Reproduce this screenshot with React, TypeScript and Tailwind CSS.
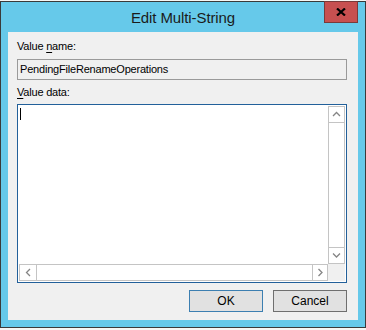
import React from "react";

function Chevron({ dir }: { dir: "up" | "down" | "left" | "right" }) {
  const pts: Record<string, string> = {
    up: "1,5 4.5,1.5 8,5",
    down: "1,1.5 4.5,5 8,1.5",
    left: "5,1 1.5,4.5 5,8",
    right: "1.5,1 5,4.5 1.5,8",
  };
  const vertical = dir === "up" || dir === "down";
  return (
    <svg
      width={vertical ? 9 : 7}
      height={vertical ? 7 : 9}
      viewBox={vertical ? "0 0 9 7" : "0 0 7 9"}
      className="block"
    >
      <polyline points={pts[dir]} fill="none" stroke="#858585" strokeWidth="1.3" />
    </svg>
  );
}

export default function App() {
  return (
    <div className="w-[366px] h-[330px] bg-[#f6f6f4] pt-[1px] font-['Liberation_Sans',Arial,sans-serif] overflow-hidden">
      <div className="relative w-[366px] h-[327px] border border-[#3a3a3a] bg-[#66c9ea] flex flex-col px-[7px] pb-[7px]">
        {/* Title bar */}
        <div className="h-[30px] shrink-0 flex items-center justify-center pt-[2px] text-[15px] text-[#1b1b1b] tracking-[-0.1px]">
          Edit Multi-String
        </div>
        {/* Close button */}
        <div className="absolute top-[-1px] right-[7px] w-[34px] h-[22px] bg-[#c75050] border border-[#7a3a3a] flex items-center justify-center">
          <svg width="10" height="8" viewBox="0 0 10 8" className="block">
            <path d="M1 0.5 L9 7.5 M9 0.5 L1 7.5" stroke="#000" strokeWidth="2.2" />
          </svg>
        </div>
        {/* Client area */}
        <div className="flex-1 bg-[#f0f0f0] flex flex-col pl-[9px] pr-[11px] pt-[7px] text-[11px] tracking-[-0.2px] text-[#000]">
          <div className="h-[15px] leading-[15px]">
            Value <u className="underline-offset-[2px]">n</u>ame:
          </div>
          <div className="mt-[5px] h-[21px] border border-[#9a9a9a] bg-[#f0f0f0] flex items-center pl-[2px] leading-[15px]">
            PendingFileRenameOperations
          </div>
          <div className="mt-[5px] h-[15px] leading-[15px]">
            <u className="underline-offset-[2px]">V</u>alue data:
          </div>
          {/* Text area */}
          <div className="mt-[4px] h-[179px] border border-[#22609a] bg-white p-[1px] grid grid-cols-[1fr_17px] grid-rows-[1fr_17px]">
            <div className="bg-white">
              <div className="ml-[1px] mt-[2px] w-[1px] h-[12px] bg-black" />
            </div>
            {/* Vertical scrollbar */}
            <div className="border border-[#c4c4c4] bg-white flex flex-col">
              <div className="h-[16px] border-b border-[#c4c4c4] flex items-center justify-center">
                <Chevron dir="up" />
              </div>
              <div className="flex-1" />
              <div className="h-[16px] border-t border-[#c4c4c4] flex items-center justify-center">
                <Chevron dir="down" />
              </div>
            </div>
            {/* Horizontal scrollbar */}
            <div className="border border-[#c4c4c4] bg-white flex">
              <div className="w-[17px] border-r border-[#c4c4c4] flex items-center justify-center">
                <Chevron dir="left" />
              </div>
              <div className="flex-1" />
              <div className="w-[15px] border-l border-[#c4c4c4] flex items-center justify-center">
                <Chevron dir="right" />
              </div>
            </div>
            <div className="bg-[#f0f0f0]" />
          </div>
          {/* Buttons */}
          <div className="mt-[7px] flex justify-end gap-[10px] text-[12px] tracking-normal">
            <button className="w-[74px] h-[22px] border border-[#3c7fb1] bg-[#e1e1e1] flex items-center justify-center">
              OK
            </button>
            <button className="w-[74px] h-[22px] border border-[#6f6f6f] bg-[#e1e1e1] flex items-center justify-center">
              Cancel
            </button>
          </div>
        </div>
      </div>
    </div>
  );
}
